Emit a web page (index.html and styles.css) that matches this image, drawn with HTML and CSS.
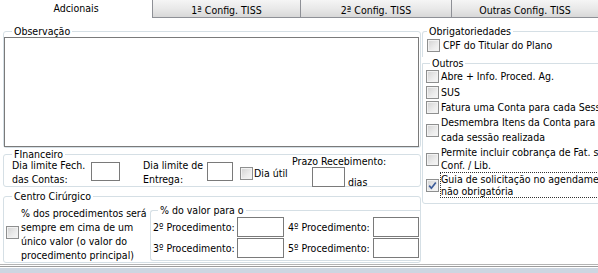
FILE: index.html
```html
<!DOCTYPE html>
<html lang="pt">
<head>
<meta charset="utf-8">
<title>Adcionais</title>
<link rel="stylesheet" href="styles.css">
</head>
<body>
<div class="window">
  <div class="tabs">
    <div class="tab active">Adcionais</div>
    <div class="tab t2">1ª Config. TISS</div>
    <div class="tab t3">2ª Config. TISS</div>
    <div class="tab t4">Outras Config. TISS</div>
  </div>
  <div class="page">
    <div class="left">
      <fieldset class="grp obs">
        <legend>Observação</legend>
        <div class="memo"></div>
      </fieldset>
      <fieldset class="grp fin">
        <legend>FInanceiro</legend>
        <div class="fin-row">
          <div class="lbl2 l1">Dia limite Fech.<br>das Contas:</div>
          <div class="edit e1"></div>
          <div class="lbl2 l2">Dia limite de<br>Entrega:</div>
          <div class="edit e2"></div>
          <span class="cb util-cb"></span>
          <div class="util">Dia útil</div>
          <div class="prazo">
            <div class="prazo-t">Prazo Recebimento:</div>
            <div class="prazo-r">
              <div class="edit e3"></div>
              <div class="dias">dias</div>
            </div>
          </div>
        </div>
      </fieldset>
      <fieldset class="grp cc">
        <legend>Centro Cirúrgico</legend>
        <div class="cc-row">
          <span class="cb cc-cb"></span>
          <div class="cc-lbl">% dos procedimentos será sempre em cima de um único valor (o valor do procedimento principal)</div>
          <fieldset class="grp inner">
            <legend>% do valor para o</legend>
            <div class="pr-grid">
              <div class="pl">2º Procedimento:</div>
              <div class="edit pe"></div>
              <div class="pl c3">4º Procedimento:</div>
              <div class="edit pe"></div>
              <div class="pl">3º Procedimento:</div>
              <div class="edit pe"></div>
              <div class="pl c3">5º Procedimento:</div>
              <div class="edit pe"></div>
            </div>
          </fieldset>
        </div>
      </fieldset>
    </div>
    <div class="right">
      <fieldset class="grp obr">
        <legend>Obrigatoriedades</legend>
        <div class="chk one cpf"><span class="cb"></span><span class="txt">CPF do Titular do Plano</span></div>
      </fieldset>
      <fieldset class="grp outros">
        <legend>Outros</legend>
        <div class="chk one r1"><span class="cb"></span><span class="txt">Abre + Info. Proced. Ag.</span></div>
        <div class="chk one r2"><span class="cb"></span><span class="txt">SUS</span></div>
        <div class="chk one r3"><span class="cb"></span><span class="txt">Fatura uma Conta para cada Sessão realizada</span></div>
        <div class="chk two r4"><span class="cb"></span><span class="txt">Desmembra Itens da Conta para<br>cada sessão realizada</span></div>
        <div class="chk two r5"><span class="cb"></span><span class="txt">Permite incluir cobrança de Fat. sem<br>Conf. / Lib.</span></div>
        <div class="chk two r6"><span class="cb checked"><svg width="11" height="11" viewBox="0 0 11 11"><path d="M2.2 5.6 L4.4 8.2 L8.8 2.4" fill="none" stroke="#3d5c99" stroke-width="1.7"/></svg></span><span class="txt focus">Guia de solicitação no agendamento<br>não obrigatória</span></div>
      </fieldset>
    </div>
  </div>
  <div class="footer"></div>
</div>
</body>
</html>
```

FILE: styles.css
```css
* { box-sizing: border-box; }
html, body { margin: 0; padding: 0; }
body {
  width: 598px;
  height: 273px;
  overflow: hidden;
  background: #fff;
  font-family: "DejaVu Sans Condensed", "DejaVu Sans", sans-serif;
  font-size: 10.5px;
  color: #000;
}
.window {
  width: 598px;
  height: 273px;
  display: flex;
  flex-direction: column;
  overflow: hidden;
}

/* tabs */
.tabs { display: flex; height: 18px; flex: none; }
.tab {
  height: 18px;
  text-align: center;
  white-space: nowrap;
  background: linear-gradient(#f5f5f5, #e9e9e9 50%, #d8d8d8);
  border-left: 1px solid #8e9096;
  border-bottom: 1px solid #8e9096;
  line-height: 15px;
  padding-top: 3px;
}
.tab.active {
  width: 152px;
  background: #fff;
  border: none;
  padding-top: 1px;
}
.tab.t2 { width: 148px; }
.tab.t3 { width: 151px; }
.tab.t4 { width: 147px; }

/* page */
.page {
  flex: none;
  height: 246px;
  display: flex;
  gap: 1px;
  padding-left: 3px;
}
.left { width: 418px; flex: none; display: flex; flex-direction: column; }
.right { width: 200px; flex: none; display: flex; flex-direction: column; }

.grp {
  margin: 0;
  padding: 0;
  min-width: 0;
  border: 1px solid #d5dfe5;
  border-radius: 3px;
}
.grp > legend {
  padding: 0 2px;
  margin-left: 8px;
  height: 12px;
  line-height: 12px;
  white-space: nowrap;
}

.edit { border: 1px solid #7a7a7a; background: #fff; flex: none; }

/* checkbox */
.cb {
  display: block;
  width: 13px;
  height: 13px;
  flex: none;
  border: 1px solid #8e8f8f;
  background: linear-gradient(135deg, #d2d2d2 0%, #ececec 60%, #f7f7f7 100%);
  box-shadow: inset 0 0 0 1px #f2f2f2;
}
.cb.checked svg { display: block; }

/* observação */
.obs { margin-top: 7px; }
.memo { height: 110px; margin-right: 1px; border: 1px solid #7a7a7a; }

/* financeiro */
.fin-row {
  display: flex;
  align-items: flex-start;
  height: 28px;
  margin-top: -2px;
  padding-left: 8px;
}
.lbl2 { line-height: 14px; white-space: nowrap; flex: none; }
.l1 { width: 79px; }
.l2 { width: 64px; margin-left: 23px; }
.e1 { width: 29px; height: 19px; margin-top: 4px; }
.e2 { width: 26px; height: 19px; margin-top: 4px; }
.util-cb { margin-left: 7px; margin-top: 9px; }
.util { margin-left: 1px; margin-top: 8px; width: 38px; line-height: 14px; white-space: nowrap; }
.prazo { display: flex; flex-direction: column; margin-top: -4px; }
.prazo-t { line-height: 14px; white-space: nowrap; }
.prazo-r { display: flex; margin-left: 20px; }
.e3 { width: 33px; height: 20px; margin-top: -1px; }
.dias { margin-left: 3px; margin-top: 7px; line-height: 14px; }

/* centro cirúrgico */
.cc { margin-top: 3px; }
.cc-row { display: flex; align-items: flex-start; padding-left: 2px; }
.cc-cb { margin-top: 24px; }
.cc-lbl { width: 127px; margin-left: 2px; margin-top: 4px; line-height: 14px; flex: none; }
.grp.inner { margin-left: 2px; margin-top: 2px; flex: 1; border-right: none; border-top-right-radius: 0; border-bottom-right-radius: 0; }
.grp.inner > legend { margin-left: 7px; }
.pr-grid {
  display: grid;
  grid-template-columns: 84px 47px 89px 46px;
  grid-auto-rows: 20px;
  row-gap: 1px;
  padding-left: 2px;
  margin-top: 1px;
  padding-bottom: 2px;
}
.pl { line-height: 20px; white-space: nowrap; }
.pl.c3 { padding-left: 4px; }
.pe { height: 20px; }

/* right column */
.grp.obr {
  margin-top: 7px;
  border-bottom: none;
  border-bottom-left-radius: 0;
  border-bottom-right-radius: 0;
  padding-bottom: 4px;
}
.grp.obr > legend { margin-left: 4px; }
.grp.outros {
  border-top-left-radius: 0;
  padding-bottom: 5px;
}
.grp.outros > legend { margin-left: 7px; }
.chk { display: flex; align-items: center; white-space: nowrap; }
.chk .txt { margin-left: 2px; }
.cpf { padding-left: 4px; margin-top: 1px; line-height: 14px; }
.cpf .txt { margin-left: 3px; }
.outros .chk { padding-left: 3px; }
.one { line-height: 15px; }
.r2 { margin-top: 1px; }
.r4 { line-height: 15px; }
.r5 { line-height: 13px; margin-top: 1px; }
.r6 { line-height: 12px; }
.r6 .txt { margin-left: 1px; }
.txt.focus { border: 1px dotted #333; padding-right: 2px; }

/* bottom edge */
.footer {
  flex: none;
  height: 9px;
  border-top: 1px solid #b4b4b4;
  background: linear-gradient(#ffffff 0, #ffffff 1px, #9c9c9c 1px, #9c9c9c 2px, #ffffff 2px, #ffffff 3px, #cdd6e1 3px);
}
```
